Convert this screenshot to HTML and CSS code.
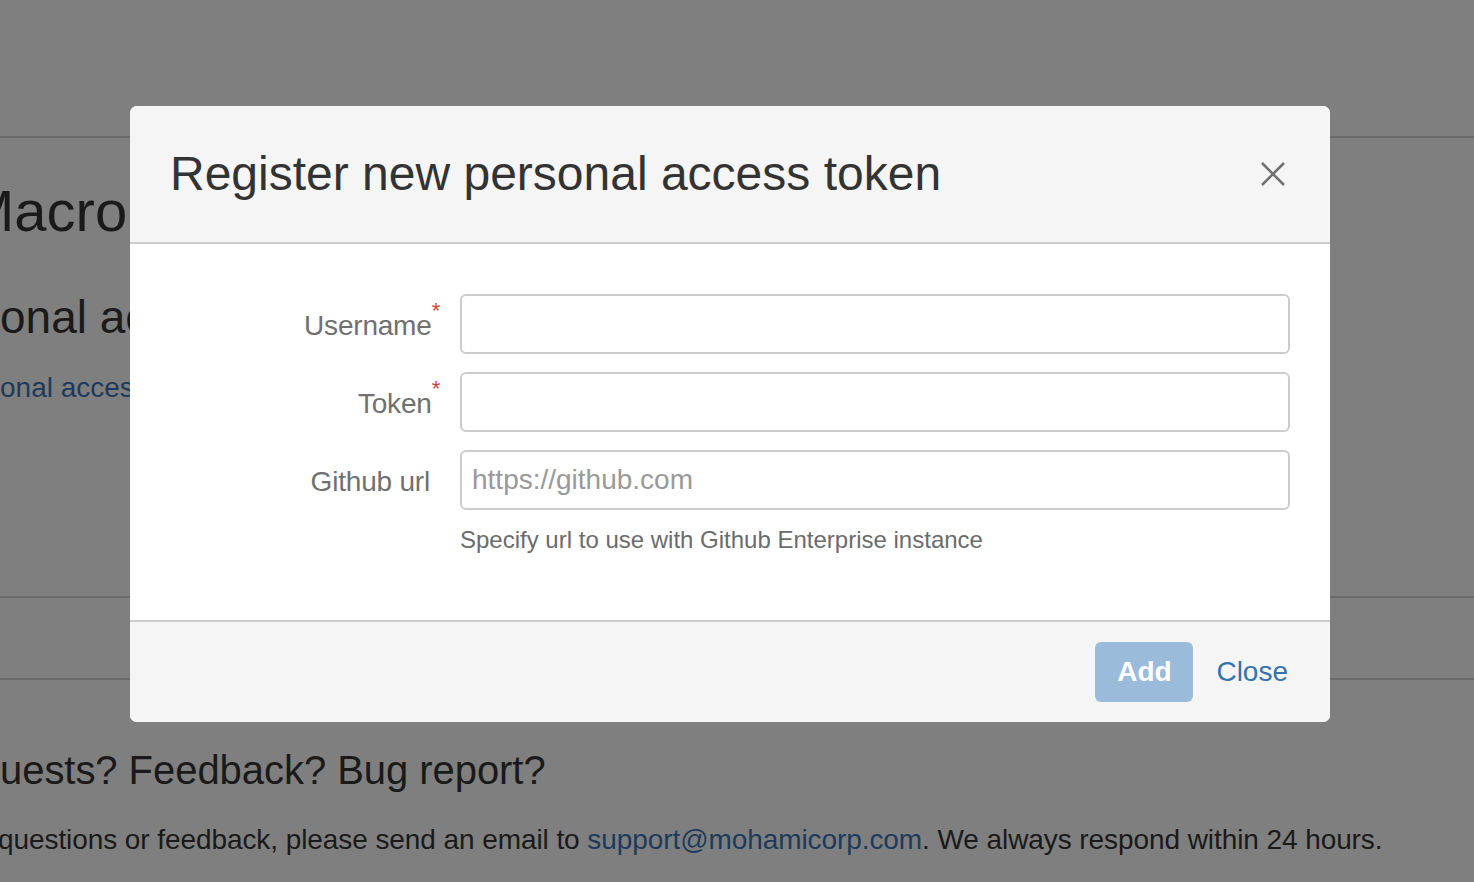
FILE: index.html
```html
<!DOCTYPE html>
<html>
<head>
<meta charset="utf-8">
<link rel="stylesheet" href="styles.css">
</head>
<body>
<div class="page">
  <div class="topbar"></div>
  <h1 class="page-title">Macro</h1>
  <h2 class="section-title">onal access tokens</h2>
  <a class="section-link" href="#">onal access tokens</a>
  <hr class="rule rule-a">
  <hr class="rule rule-b">
  <h2 class="feedback-title">uests? Feedback? Bug report?</h2>
  <p class="feedback-text">questions or feedback, please send an email to <a href="#">support@mohamicorp.com</a>. We always respond within 24 hours.</p>
</div>

<div class="dialog">
  <header class="dialog-header">
    <h2 class="dialog-title">Register new personal access token</h2>
    <button class="dialog-close" aria-label="Close">
      <svg width="26" height="26" viewBox="0 0 26 26"><path d="M2 2 L24 24 M24 2 L2 24" stroke="#707070" stroke-width="2.6" fill="none"/></svg>
    </button>
  </header>
  <div class="dialog-body">
    <form class="form">
      <label class="form-label">Username<span class="req">*</span></label>
      <input class="form-input" type="text">
      <label class="form-label">Token<span class="req">*</span></label>
      <input class="form-input" type="text">
      <label class="form-label">Github url</label>
      <div class="field">
        <input class="form-input" type="text" placeholder="https://github.com">
        <div class="form-desc">Specify url to use with Github Enterprise instance</div>
      </div>
    </form>
  </div>
  <footer class="dialog-footer">
    <button class="btn-primary" disabled>Add</button>
    <a class="btn-link" href="#">Close</a>
  </footer>
</div>
</body>
</html>
```

FILE: styles.css
```css
html, body {
  margin: 0;
  padding: 0;
}
body {
  background: #7f7f7f;
  font-family: "Liberation Sans", Arial, sans-serif;
  color: #1a1a1a;
  width: 1474px;
  height: 882px;
  overflow: hidden;
}
.page {
  white-space: nowrap;
}
.topbar {
  height: 136px;
  border-bottom: 2px solid #6a6a6a;
}
.page-title {
  margin: 44px 0 0 -34px;
  font-size: 58px;
  font-weight: normal;
  line-height: 1;
}
.section-title {
  margin: 54px 0 0 0;
  font-size: 46px;
  font-weight: normal;
  line-height: 1;
}
.section-link {
  display: block;
  margin-top: 34px;
  font-size: 28px;
  line-height: 1;
  color: #1c3b5c;
  text-decoration: none;
}
.rule {
  border: 0;
  border-top: 2px solid #6a6a6a;
  margin: 0;
}
.rule-a { margin-top: 194px; }
.rule-b { margin-top: 80px; }
.feedback-title {
  margin: 70px 0 0 0;
  font-size: 40px;
  font-weight: normal;
  line-height: 1;
  letter-spacing: -0.05px;
}
.feedback-text {
  margin: 36px 0 0 -2px;
  font-size: 28px;
  line-height: 1;
  letter-spacing: -0.08px;
}
.feedback-text a {
  color: #1c3b5c;
  text-decoration: none;
}

.dialog {
  position: absolute;
  left: 130px;
  top: 106px;
  width: 1200px;
  background: #fff;
  border-radius: 7px;
  overflow: hidden;
  display: flex;
  flex-direction: column;
}
.dialog-header {
  height: 136px;
  background: #f5f5f5;
  border-bottom: 2px solid #cccccc;
  display: flex;
  align-items: center;
  justify-content: space-between;
  padding: 0 44px 0 40px;
}
.dialog-title {
  margin: 0;
  font-size: 48px;
  font-weight: normal;
  color: #333;
  line-height: 1;
}
.dialog-close {
  background: none;
  border: 0;
  padding: 0;
  width: 26px;
  height: 26px;
  display: flex;
}
.dialog-body {
  padding: 50px 40px 64px 0;
}
.form {
  display: grid;
  grid-template-columns: 300px 1fr;
  column-gap: 30px;
  row-gap: 18px;
  margin: 0;
}
.form-label {
  text-align: right;
  font-size: 28px;
  height: 60px;
  line-height: 63px;
  color: #707070;
  letter-spacing: -0.2px;
}
.req {
  color: #d04437;
  font-size: 22px;
  vertical-align: top;
  line-height: 34px;
  margin-right: -10px;
  margin-left: 0;
}
.form-input {
  box-sizing: border-box;
  width: 100%;
  height: 60px;
  border: 2px solid #cccccc;
  border-radius: 6px;
  padding: 0 10px;
  font-family: "Liberation Sans", Arial, sans-serif;
  font-size: 28px;
  color: #333;
  background: #fff;
  display: block;
  margin: 0;
}
.form-input::placeholder {
  color: #999;
}
.form-desc {
  margin-top: 14px;
  font-size: 24px;
  line-height: 32px;
  color: #6b6b6b;
}
.dialog-footer {
  height: 102px;
  box-sizing: border-box;
  background: #f5f5f5;
  border-top: 2px solid #cccccc;
  display: flex;
  align-items: center;
  justify-content: flex-end;
  padding: 0 42px 0 0;
  gap: 23px;
}
.btn-primary {
  width: 98px;
  height: 60px;
  border: 0;
  border-radius: 6px;
  background: #9bbbdb;
  color: #fff;
  font-family: "Liberation Sans", Arial, sans-serif;
  font-weight: bold;
  font-size: 28px;
  padding: 0;
}
.btn-link {
  color: #3572b0;
  font-size: 28px;
  text-decoration: none;
}
```
